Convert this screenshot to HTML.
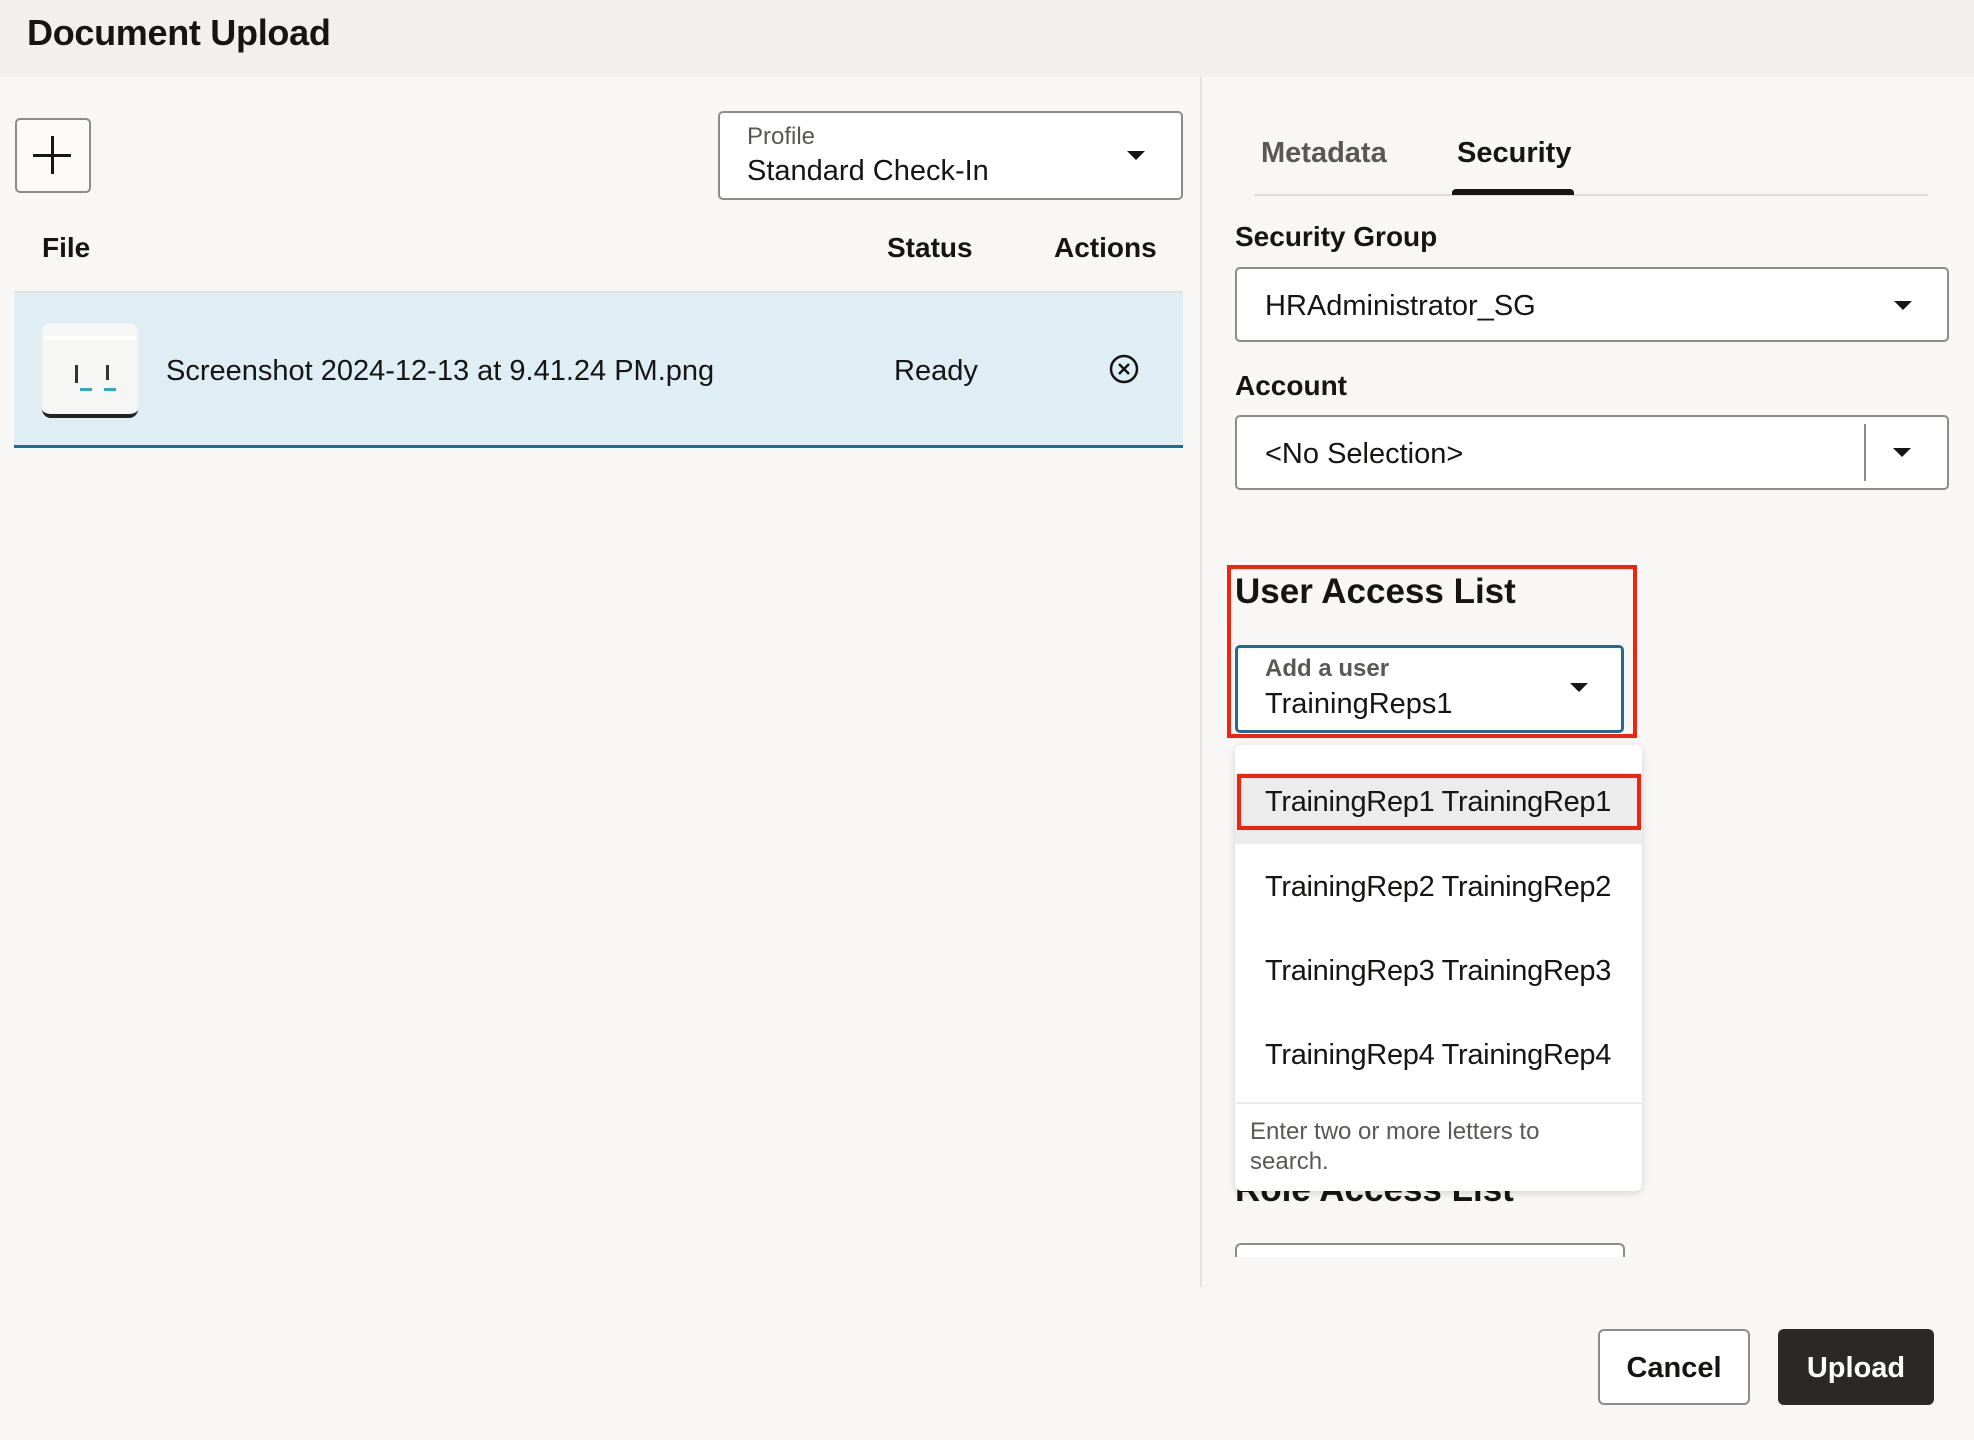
<!DOCTYPE html>
<html><head><meta charset="utf-8"><style>
*{box-sizing:border-box;margin:0;padding:0}
body{width:1974px;height:1440px;background:#f8f7f5;font-family:"Liberation Sans",sans-serif;color:#161513;position:relative;overflow:hidden}
.a{position:absolute}
.hdr{left:0;top:0;width:1974px;height:77px;background:#f1f0ee}
.t{white-space:nowrap}
.box{background:#fff;border:2px solid #8e8c89;border-radius:5px}
.caret{width:0;height:0;border-left:9px solid transparent;border-right:9px solid transparent;border-top:9px solid #161513}
</style></head><body>
<div class="a hdr"></div>
<div class="a t" style="left:27px;top:12px;font-size:36px;font-weight:bold;letter-spacing:-0.3px">Document Upload</div>

<div class="a" style="left:15px;top:118px;width:76px;height:75px;border:2px solid #8e8c89;border-radius:5px;background:#fbfaf9"></div>
<div class="a" style="left:33px;top:154px;width:38px;height:3px;background:#161513"></div>
<div class="a" style="left:51px;top:136px;width:3px;height:38px;background:#161513"></div>

<div class="a box" style="left:718px;top:111px;width:465px;height:89px"></div>
<div class="a t" style="left:747px;top:123px;font-size:24px;color:#5a5855">Profile</div>
<div class="a t" style="left:747px;top:155px;font-size:29px">Standard Check-In</div>
<div class="a caret" style="left:1127px;top:151px"></div>

<div class="a t" style="left:42px;top:232px;font-size:28px;font-weight:bold">File</div>
<div class="a t" style="left:887px;top:232px;font-size:28px;font-weight:bold">Status</div>
<div class="a t" style="left:1054px;top:232px;font-size:28px;font-weight:bold">Actions</div>

<div class="a" style="left:14px;top:291px;width:1169px;height:157px;background:#dfedf5;border-top:2px solid #e4e2df;border-bottom:3px solid #1f6b94"></div>
<div class="a" style="left:42px;top:323px;width:96px;height:95px;background:#f6f6f4;border-radius:9px;border-bottom:4px solid #222"></div>
<div class="a" style="left:44px;top:336px;width:92px;height:4px;background:#fff"></div>
<div class="a" style="left:75px;top:365px;width:3px;height:18px;background:#333"></div>
<div class="a" style="left:106px;top:365px;width:3px;height:15px;background:#333"></div>
<div class="a" style="left:80px;top:388px;width:12px;height:3px;background:#3ab"></div>
<div class="a" style="left:104px;top:388px;width:12px;height:3px;background:#3ab"></div>
<div class="a t" style="left:166px;top:355px;font-size:29px">Screenshot 2024-12-13 at 9.41.24 PM.png</div>
<div class="a t" style="left:894px;top:355px;font-size:29px">Ready</div>
<svg class="a" style="left:1108px;top:353px" width="32" height="32" viewBox="0 0 32 32"><circle cx="16" cy="16" r="13" fill="none" stroke="#161513" stroke-width="2.5"/><path d="M11 11L21 21M21 11L11 21" stroke="#161513" stroke-width="2.5"/></svg>

<div class="a" style="left:1200px;top:77px;width:2px;height:1210px;background:#e4e2df"></div>

<div class="a t" style="left:1261px;top:137px;font-size:29px;font-weight:bold;color:#5a5855">Metadata</div>
<div class="a t" style="left:1457px;top:137px;font-size:29px;font-weight:bold">Security</div>
<div class="a" style="left:1254px;top:194px;width:674px;height:2px;background:#dedcd9"></div>
<div class="a" style="left:1452px;top:189px;width:122px;height:6px;background:#161513;border-radius:4px 4px 0 0"></div>

<div class="a t" style="left:1235px;top:221px;font-size:28px;font-weight:bold">Security Group</div>
<div class="a box" style="left:1235px;top:267px;width:714px;height:75px"></div>
<div class="a t" style="left:1265px;top:290px;font-size:29px">HRAdministrator_SG</div>
<div class="a caret" style="left:1894px;top:301px"></div>

<div class="a t" style="left:1235px;top:370px;font-size:28px;font-weight:bold">Account</div>
<div class="a box" style="left:1235px;top:415px;width:714px;height:75px"></div>
<div class="a t" style="left:1265px;top:438px;font-size:29px">&lt;No Selection&gt;</div>
<div class="a" style="left:1864px;top:424px;width:2px;height:57px;background:#8e8c89"></div>
<div class="a caret" style="left:1893px;top:448px"></div>

<div class="a t" style="left:1235px;top:572px;font-size:35px;font-weight:bold">User Access List</div>
<div class="a" style="left:1227px;top:565px;width:410px;height:173px;border:4px solid #f0230e"></div>
<div class="a" style="left:1235px;top:645px;width:389px;height:88px;background:#fff;border:3px solid #1f6b94;border-radius:5px"></div>
<div class="a t" style="left:1265px;top:655px;font-size:24px;font-weight:bold;color:#5a5855">Add a user</div>
<div class="a t" style="left:1265px;top:688px;font-size:29px">TrainingReps1</div>
<div class="a caret" style="left:1570px;top:683px"></div>

<div class="a t" style="left:1235px;top:1170px;font-size:35px;font-weight:bold">Role Access List</div>
<div class="a" style="left:1235px;top:1243px;width:390px;height:20px;border:2px solid #8e8c89;border-bottom:none;border-radius:6px 6px 0 0;background:#fff"></div>
<div class="a" style="left:1210px;top:1257px;width:440px;height:30px;background:#f8f7f5"></div>

<div class="a" style="left:1235px;top:745px;width:407px;height:446px;background:#fff;border-radius:7px;box-shadow:0 2px 8px rgba(0,0,0,.15);z-index:2;overflow:hidden">
  <div class="a" style="left:0;top:28px;width:407px;height:71px;background:#ececec"></div>
  <div class="a" style="left:2px;top:29px;width:404px;height:56px;border:4px solid #f0230e"></div>
  <div class="a t" style="left:30px;top:41px;font-size:29px;letter-spacing:-0.3px">TrainingRep1 TrainingRep1</div>
  <div class="a t" style="left:30px;top:126px;font-size:29px;letter-spacing:-0.3px">TrainingRep2 TrainingRep2</div>
  <div class="a t" style="left:30px;top:210px;font-size:29px;letter-spacing:-0.3px">TrainingRep3 TrainingRep3</div>
  <div class="a t" style="left:30px;top:294px;font-size:29px;letter-spacing:-0.3px">TrainingRep4 TrainingRep4</div>
  <div class="a" style="left:0;top:357px;width:407px;height:2px;background:#ecebe9"></div>
  <div class="a" style="left:15px;top:372px;font-size:24px;color:#5a5855;line-height:30px;width:320px">Enter two or more letters to search.</div>
</div>

<div class="a" style="left:1598px;top:1329px;width:152px;height:76px;border:2px solid #8e8c89;border-radius:6px;background:#fff"></div>
<div class="a t" style="left:1598px;top:1352px;width:152px;text-align:center;font-size:29px;font-weight:bold">Cancel</div>
<div class="a" style="left:1778px;top:1329px;width:156px;height:76px;border-radius:6px;background:#2b2825"></div>
<div class="a t" style="left:1778px;top:1352px;width:156px;text-align:center;font-size:29px;font-weight:bold;color:#fff">Upload</div>
</body></html>
